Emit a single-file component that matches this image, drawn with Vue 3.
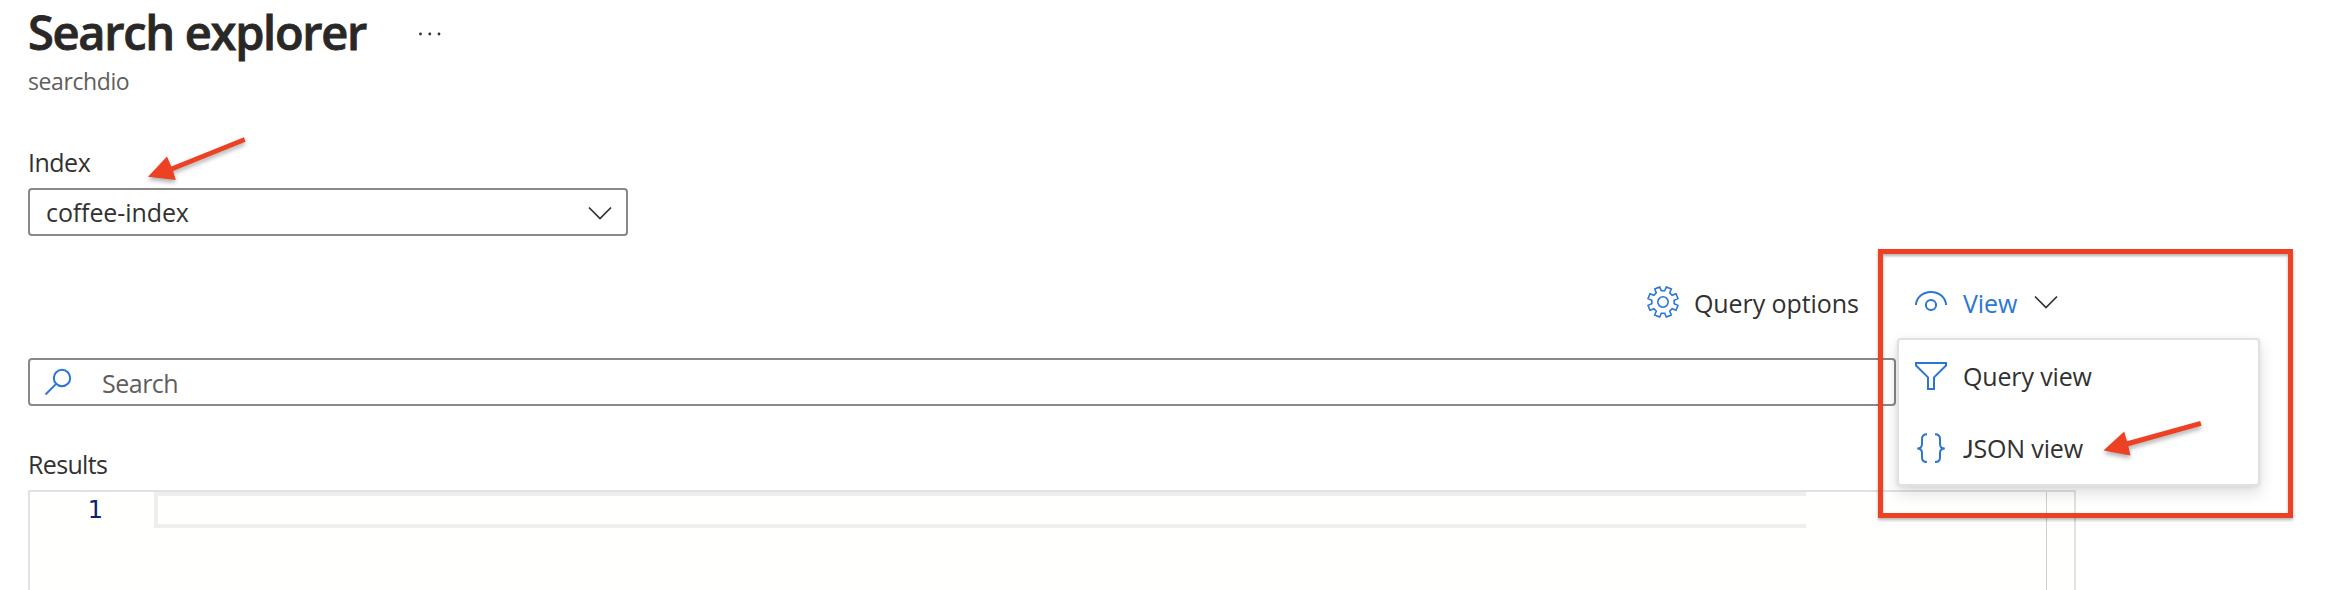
<script setup>
// Outline of the settings gear: eight teeth around a 32px viewBox centre.
const point = (deg, r) => {
  const a = (deg * Math.PI) / 180
  return `${(16 + r * Math.cos(a)).toFixed(2)},${(16 + r * Math.sin(a)).toFixed(2)}`
}
const gearPoints = Array.from({ length: 8 }, (_, i) => {
  const a = 22.5 + i * 45
  return [point(a - 14, 11.3), point(a - 10, 15.4), point(a + 10, 15.4), point(a + 14, 11.3)].join(' ')
}).join(' ')
</script>

<template>
  <main class="page">
    <header class="heading">
      <h1>Search explorer</h1>
      <svg class="more" width="24" height="6" viewBox="0 0 24 6">
        <circle cx="2.5" cy="3" r="1.4" /><circle cx="11.8" cy="3" r="1.4" /><circle cx="21" cy="3" r="1.4" />
      </svg>
    </header>
    <p class="subtitle">searchdio</p>

    <label class="index-label">Index</label>
    <div class="select">
      <span class="coffee">coffee-index</span>
      <svg class="chevron" width="24" height="14" viewBox="0 0 24 14"><path d="M1 1.5 12 12.5 23 1.5" /></svg>
    </div>

    <div class="toolbar">
      <button class="tool">
        <svg class="icon gear" width="32" height="32" viewBox="0 0 32 32">
          <polygon :points="gearPoints" />
          <circle cx="16" cy="16" r="5.2" />
        </svg>
        <span class="options-text">Query options</span>
      </button>
      <div class="view">
        <button class="tool active">
          <svg class="icon" width="32" height="32" viewBox="0 0 32 32">
            <path d="M.9 18C1.3 10.600 7.500 4.900 16 4.900S30.700 10.600 31.100 18" />
            <circle cx="16" cy="18" r="5.100" />
          </svg>
          <span class="view-text">View</span>
          <svg class="chevron" width="24" height="14" viewBox="0 0 24 14"><path d="M1 1.5 12 12.5 23 1.5" /></svg>
        </button>
        <div class="menu">
          <div class="item">
            <svg class="icon" width="32" height="32" viewBox="0 0 32 32">
              <path d="M1 3H31V5.500L19 17.300V29H13V17.300L1 5.500Z" />
            </svg>
            <span>Query view</span>
          </div>
          <div class="item">
            <svg class="icon braces" width="32" height="32" viewBox="0 0 32 32">
              <path d="M12 2.200C8.500 2.200 7 3.800 7 7V12C7 15 5.500 16.500 2.200 16.500C5.500 16.500 7 18 7 21V25.500C7 28.500 8.500 30 12 30" />
              <path d="M20 2.200C23.500 2.200 25 3.800 25 7V12C25 15 26.500 16.500 29.800 16.500C26.500 16.500 25 18 25 21V25.500C25 28.500 23.500 30 20 30" />
            </svg>
            <span><span class="letter-j">J</span>SON view</span>
          </div>
        </div>
        <div class="callout"></div>
      </div>
    </div>

    <div class="search">
      <svg class="icon" width="28" height="28" viewBox="0 0 28 28">
        <circle cx="18" cy="10" r="8.200" /><path d="M12.100 15.900 1.500 26.500" />
      </svg>
      <span>Search</span>
    </div>

    <label class="results-label">Results</label>
    <div class="editor">
      <div class="gutter">1</div>
      <div class="line"></div>
      <div class="ruler"></div>
    </div>

    <svg class="arrows" width="2340" height="590" viewBox="0 0 2340 590">
      <g><path d="M148 176.800 167 156.500 171.300 166.500 244 137.200 245.500 141.800 173 171 175.800 180Z" /></g>
      <g><path d="M2103.500 450.500 2124.200 431.500 2127 441.300 2200.200 421 2201.500 425.700 2128.300 446.300 2130.500 455.500Z" /></g>
    </svg>
  </main>
</template>

<style>
body { background: #fff; overflow: hidden; }
</style>

<style scoped>
* { box-sizing: border-box; }
.page {
  position: relative;
  width: 2340px;
  height: 590px;
  padding: 2px 0 0 28px;
  overflow: hidden;
  background: #fff;
  color: #323130;
  font: 25px/32px "Open Sans", "Noto Sans", sans-serif;
  white-space: nowrap;
}
.heading { display: flex; align-items: center; height: 60px; }
h1 {
  width: 390px;
  margin: 0;
  color: #292827;
  font-size: 47px;
  line-height: 60px;
  font-weight: 600;
  letter-spacing: -1.300px;
  -webkit-text-stroke: .8px #292827;
}
.more { fill: #323130; margin-top: 4px; }
.subtitle { margin: 3px 0 0; color: #605e5c; font-size: 23px; letter-spacing: -.400px; }
.index-label { display: block; margin-top: 49px; letter-spacing: -.500px; }
.select {
  display: flex;
  align-items: center;
  justify-content: space-between;
  width: 600px;
  height: 48px;
  margin-top: 10px;
  padding: 0 14px 0 16px;
  border: 2px solid #8a8886;
  border-radius: 4px;
}
.coffee { letter-spacing: -.100px; }
.select .chevron { margin: 2px 0 0; }
.chevron { fill: none; stroke: #323130; stroke-width: 1.700; }
.icon { flex: none; fill: none; stroke: #2b76d2; stroke-width: 2; }
.toolbar { display: flex; gap: 56px; height: 40px; margin: 47px 0 0 1618px; }
.tool {
  display: flex;
  align-items: center;
  gap: 16px;
  height: 40px;
  padding: 0;
  border: 0;
  background: none;
  color: inherit;
  font: inherit;
}
.tool:not(.active) { width: 213px; }
.tool .gear { margin: -2px -.500px 0 .500px; stroke-width: 1.600; }
.options-text { letter-spacing: -.080px; }
.view { position: relative; }
.active { color: #2b76d2; }
.active .icon { margin-top: 0; }
.active .chevron { margin: -3px 0 0 1px; }
.view-text { letter-spacing: -.100px; }
.menu {
  position: absolute;
  z-index: 1;
  top: 55px;
  left: -18px;
  width: 363px;
  height: 148px;
  border: 2px solid #e1e1e1;
  border-radius: 4px;
  background: #fff;
  box-shadow: 0 7px 16px rgba(0, 0, 0, .13), 0 1px 4px rgba(0, 0, 0, .08);
}
.item { display: flex; align-items: center; gap: 16px; height: 72px; padding: 0 16px; letter-spacing: -.150px; }
.braces { margin-top: -1px; }
.letter-j { font-family: Lato, sans-serif; }
.callout {
  position: absolute;
  z-index: 2;
  top: -34px;
  left: -37px;
  width: 415px;
  height: 269px;
  border: 5px solid #ed4124;
  box-shadow: 0 2px 3px rgba(0, 0, 0, .3), inset 0 2px 3px rgba(0, 0, 0, .3);
}
.search {
  display: flex;
  align-items: center;
  gap: 30px;
  width: 1868px;
  height: 48px;
  margin-top: 35px;
  padding: 1px 14px 0;
  border: 2px solid #8a8886;
  border-radius: 4px;
  color: #605e5c;
  letter-spacing: -.500px;
}
.search .icon { margin-top: -1px; }
.results-label { display: block; margin-top: 42px; letter-spacing: -.650px; }
.editor {
  display: flex;
  width: 2048px;
  height: 110px;
  margin-top: 10px;
  border: 2px solid #e1e1e1;
  border-bottom: 0;
  background: #fffffd;
}
.gutter { width: 124px; padding: 1px 51px 0 0; text-align: right; color: #0b216f; font: 24px/34px "DejaVu Sans", sans-serif; }
.line { width: 1652px; height: 36px; border: 4px solid #eee; border-right: 0; }
.ruler { width: 28px; margin-left: auto; border-left: 1px solid #cfcfcf; }
.arrows { position: absolute; inset: 0; z-index: 3; fill: #ed4124; pointer-events: none; }
.arrows g { filter: drop-shadow(0 3px 2px rgba(0, 0, 0, .3)); }
</style>
